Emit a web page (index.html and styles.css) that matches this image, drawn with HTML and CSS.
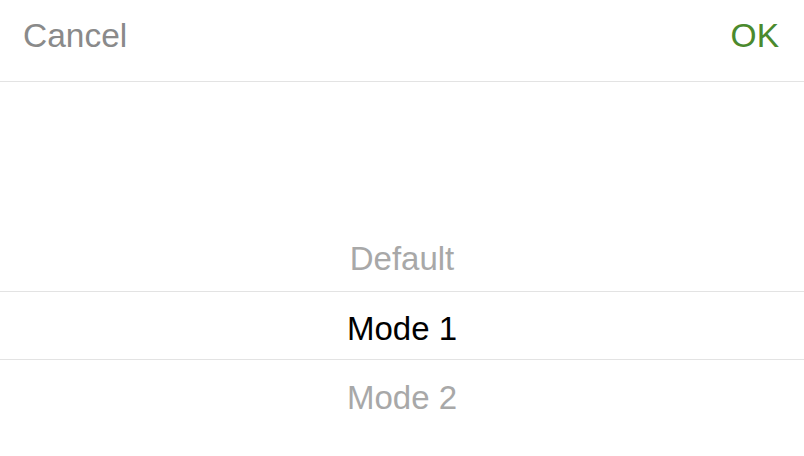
FILE: index.html
```html
<!DOCTYPE html>
<html lang="en">
<head>
    <meta charset="UTF-8">
    <meta name="viewport" content="width=device-width, initial-scale=1.0">
    <title>Mode Picker</title>
    <link rel="stylesheet" href="styles.css">
</head>
<body>

    <div class="picker-header">
        <span class="header-btn cancel-btn">Cancel</span>
        <span class="header-btn ok-btn">OK</span>
    </div>

    <div class="picker-wheel">
        <div class="wheel-row">Default</div>
        <div class="wheel-row selected">Mode 1</div>
        <div class="wheel-row">Mode 2</div>
    </div>

</body>
</html>
```

FILE: styles.css
```css
body {
    margin: 0;
    background-color: #fff;
    font-family: "Liberation Sans", Arial, sans-serif;
}

.picker-header {
    display: flex;
    justify-content: space-between;
    height: 82px;
    padding: 19px 25px 0 23px;
    box-sizing: border-box;
    border-bottom: 1px solid #e3e3e3;
}

.header-btn {
    font-size: 33.5px;
    line-height: 33px;
}

.cancel-btn {
    color: #8a8a8a;
}

.ok-btn {
    color: #4b8a2d;
}

.picker-wheel {
    padding-top: 141px;
}

.wheel-row {
    height: 68px;
    line-height: 72px;
    text-align: center;
    font-size: 33px;
    color: #a8a8a8;
}

.wheel-row.selected {
    height: 67px;
    line-height: 74px;
    color: #000;
    border-top: 1px solid #e3e3e3;
    border-bottom: 1px solid #e3e3e3;
}

.selected + .wheel-row {
    line-height: 76px;
}
```
